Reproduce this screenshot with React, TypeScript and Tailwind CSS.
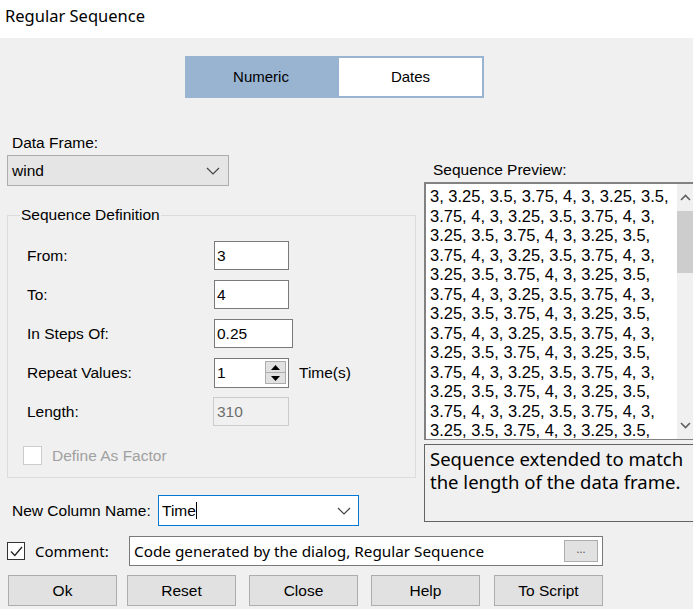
import React from 'react';

const sans = { fontFamily: '"Liberation Sans", Arial, sans-serif' };
const segoe = { fontFamily: '"Noto Sans", "Open Sans", sans-serif' };

const Chevron: React.FC<{ className?: string }> = ({ className }) => (
  <svg width="14" height="8" viewBox="0 0 14 8" className={className}>
    <path d="M1 1 L7 7 L13 1" fill="none" stroke="#444" strokeWidth="1.2" />
  </svg>
);

// preview alternates between two wrapped lines after the first
const previewLines: string[] = ['3, 3.25, 3.5, 3.75, 4, 3, 3.25, 3.5,'];
for (let i = 1; i < 13; i++) {
  previewLines.push(i % 2 === 1 ? '3.75, 4, 3, 3.25, 3.5, 3.75, 4, 3,' : '3.25, 3.5, 3.75, 4, 3, 3.25, 3.5,');
}

const Field: React.FC<{ label: string; children: React.ReactNode }> = ({ label, children }) => (
  <div className="flex items-center h-[29px]">
    <div className="w-[187px] text-[15.5px] text-black">{label}</div>
    {children}
  </div>
);

const TextBox: React.FC<{ value: string; w: string }> = ({ value, w }) => (
  <div className={`${w} h-[29px] bg-white border border-[#7a7a7a] flex items-center pl-[2px] text-[15.5px] text-black`}>
    {value}
  </div>
);

const Btn: React.FC<{ label: string; className?: string }> = ({ label, className }) => (
  <div
    className={`w-[109px] h-[31px] bg-[#e1e1e1] border border-[#adadad] flex items-center justify-center text-[15.5px] text-black ${className ?? ''}`}
  >
    {label}
  </div>
);

export default function App() {
  return (
    <div className="w-[693px] h-[609px] overflow-hidden bg-[#f0f0f0] text-black" style={sans}>
      {/* Title bar */}
      <div className="h-[38px] bg-white flex items-center pl-[5px] pb-[6px] text-[16.5px]" style={segoe}>
        Regular Sequence
      </div>

      {/* Tabs */}
      <div className="flex pl-[185px] mt-[18px]">
        <div className="w-[152px] h-[42px] bg-[#99b4d1] flex items-center justify-center text-[15px]">Numeric</div>
        <div className="w-[147px] h-[42px] bg-white border-2 border-[#99b4d1] flex items-center justify-center text-[15px]">
          Dates
        </div>
      </div>

      {/* Main */}
      <div className="flex mt-[36px]">
        {/* Left column */}
        <div className="w-[417px] pl-[7px]">
          <div className="pl-[5px] h-[18px] leading-[18px] text-[15.5px]">Data Frame:</div>
          <div className="mt-[3px] w-[222px] h-[31px] bg-[#e5e5e5] border border-[#adadad] flex items-center justify-between pl-[4px] pr-[8px] text-[15.5px]">
            <span>wind</span>
            <Chevron />
          </div>

          <fieldset className="mt-[20px] w-[409px] border border-[#dcdcdc] pl-[19px] pt-[17px] pb-[12px]">
            <legend className="ml-[-7px] px-[1px] text-[15.5px] leading-[18px]">Sequence Definition</legend>
            <div className="flex flex-col gap-[10px]">
              <Field label="From:">
                <TextBox value="3" w="w-[75px]" />
              </Field>
              <Field label="To:">
                <TextBox value="4" w="w-[75px]" />
              </Field>
              <Field label="In Steps Of:">
                <TextBox value="0.25" w="w-[79px]" />
              </Field>
              <Field label="Repeat Values:">
                <div className="w-[75px] h-[30px] bg-white border border-[#7a7a7a] flex items-center pl-[2px] pr-[2px] text-[15.5px]">
                  <span className="flex-1">1</span>
                  <div className="w-[21px] h-[23px] flex flex-col border border-[#adadad] bg-[#e1e1e1]">
                    <div className="flex-1 flex items-center justify-center border-b border-[#adadad]">
                      <svg width="9" height="5" viewBox="0 0 9 5">
                        <path d="M0 5 L4.5 0 L9 5 Z" fill="#000" />
                      </svg>
                    </div>
                    <div className="flex-1 flex items-center justify-center">
                      <svg width="9" height="5" viewBox="0 0 9 5">
                        <path d="M0 0 L4.5 5 L9 0 Z" fill="#000" />
                      </svg>
                    </div>
                  </div>
                </div>
                <span className="ml-[10px] text-[15.5px]">Time(s)</span>
              </Field>
              <div className="flex items-center h-[29px]">
                <div className="w-[186px] text-[15.5px]">Length:</div>
                <div className="w-[76px] h-[29px] bg-[#f0f0f0] border border-[#cccccc] flex items-center pl-[3px] text-[15.5px] text-[#6d6d6d]">
                  310
                </div>
              </div>
            </div>
            <div className="flex items-center mt-[20px] ml-[-4px] h-[19px]">
              <div className="w-[19px] h-[19px] bg-white border border-[#cccccc]" />
              <span className="ml-[10px] text-[15.5px] text-[#a0a0a0]">Define As Factor</span>
            </div>
          </fieldset>

          <div className="flex items-center mt-[17px] h-[31px]">
            <div className="w-[151px] pl-[5px] text-[15.5px]">New Column Name:</div>
            <div className="w-[201px] h-[31px] bg-white border border-[#0078d7] flex items-center justify-between pl-[3px] pr-[7px] text-[15.5px]">
              <span>
                Time<span className="inline-block w-px h-[17px] bg-black align-[-3px]" />
              </span>
              <Chevron />
            </div>
          </div>
        </div>

        {/* Right column */}
        <div className="ml-[7px] pt-[27px] flex-1 min-w-0">
          <div className="pl-[9px] h-[18px] leading-[18px] text-[15.5px]">Sequence Preview:</div>
          <div className="mt-[3px] w-[290px] h-[258px] bg-white border border-[#828282] border-t-2 border-l-2 flex overflow-hidden">
            <div className="w-[250px] pl-[4px] pt-[3px] text-[16.5px] leading-[19.5px] whitespace-nowrap">
              {previewLines.map((l, i) => (
                <div key={i}>{l}</div>
              ))}
            </div>
            <div className="ml-[1px] w-[17px] bg-[#f0f0f0] flex flex-col items-center">
              <svg width="11" height="7" viewBox="0 0 11 7" className="mt-[10px]">
                <path d="M1 6 L5.5 1.5 L10 6" fill="none" stroke="#606060" strokeWidth="1.6" />
              </svg>
              <div className="mt-[10px] w-[17px] h-[62px] bg-[#cdcdcd]" />
              <div className="flex-1" />
              <svg width="11" height="7" viewBox="0 0 11 7" className="mb-[10px]">
                <path d="M1 1 L5.5 5.5 L10 1" fill="none" stroke="#606060" strokeWidth="1.6" />
              </svg>
            </div>
          </div>
          <div
            className="mt-[4px] w-[290px] h-[78px] border border-[#646464] pl-[5px] pt-[2px] text-[18.5px] leading-[23px]"
            style={segoe}
          >
            <div>Sequence extended to match</div>
            <div>the length of the data frame.</div>
          </div>
        </div>
      </div>

      {/* Comment row */}
      <div className="flex items-center mt-[10px] h-[30px] pl-[7px]">
        <div className="w-[18px] h-[18px] bg-white border border-[#333] flex items-center justify-center">
          <svg width="13" height="11" viewBox="0 0 13 11">
            <path d="M1 5.5 L4.8 9.5 L12 1" fill="none" stroke="#222" strokeWidth="1.3" />
          </svg>
        </div>
        <span className="ml-[10px] w-[94px] text-[15px]" style={segoe}>
          Comment:
        </span>
        <div className="w-[474px] h-[30px] bg-white border border-[#7a7a7a] flex items-center justify-between pl-[4px] pr-[4px] text-[15.3px]" style={segoe}>
          <span>Code generated by the dialog, Regular Sequence</span>
          <div className="w-[34px] h-[22px] bg-[#e1e1e1] border border-[#adadad] flex items-center justify-center text-[11px] text-[#555] pb-[3px]">
            ...
          </div>
        </div>
      </div>

      {/* Buttons */}
      <div className="flex mt-[9px] pl-[8px]">
        <Btn label="Ok" />
        <Btn label="Reset" className="ml-[10px]" />
        <Btn label="Close" className="ml-[13px]" />
        <Btn label="Help" className="ml-[13px]" />
        <Btn label="To Script" className="ml-[14px]" />
      </div>
    </div>
  );
}
